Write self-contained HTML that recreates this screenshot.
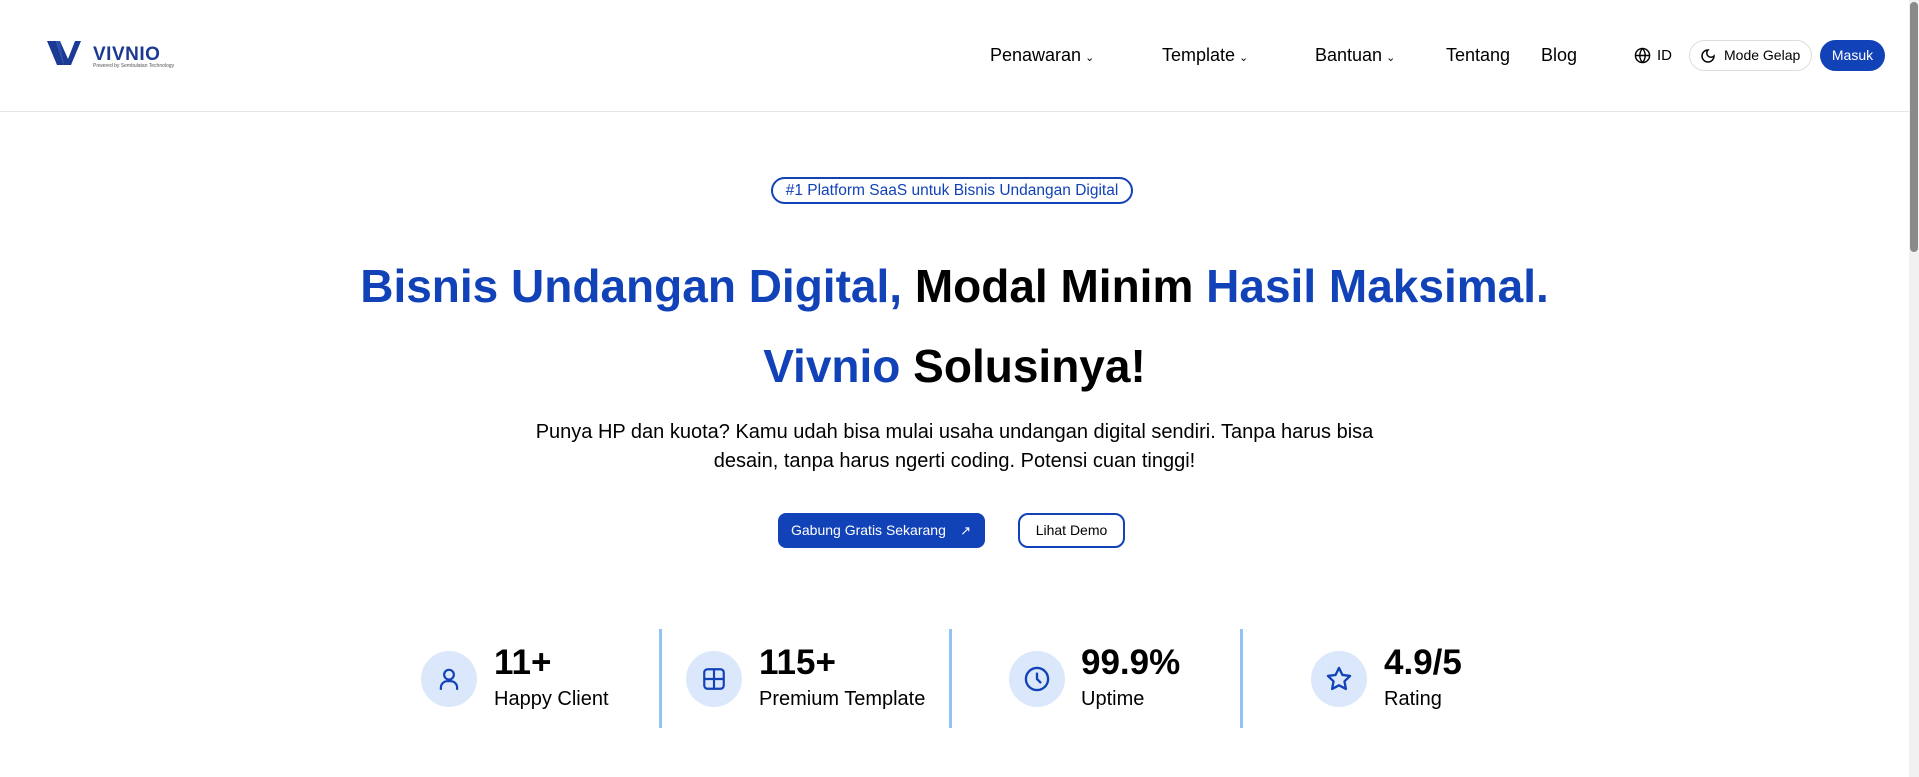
<!DOCTYPE html>
<html><head><meta charset="utf-8"><style>
*{margin:0;padding:0;box-sizing:border-box}
body{width:1919px;height:777px;overflow:hidden;background:#fff;font-family:"Liberation Sans",sans-serif;color:#000;position:relative}
.a{position:absolute;white-space:nowrap}
.nav{font-size:18px;top:45px}
.car{font-size:11px;margin-left:4px}
.blue{color:#1242b8}
.stat .n{font-size:35px;font-weight:bold;top:643px}
.stat .l{font-size:20px;top:688px}
.circ{width:56px;height:56px;border-radius:50%;background:#dbe8fb;top:651px;display:flex;align-items:center;justify-content:center}
.div{width:3px;height:99px;background:#93c3f3;top:629px}
</style></head><body>
<div class="a" style="left:0;top:111px;width:1909px;height:1px;background:#e6e6e6"></div>
<div class="a" style="left:1909px;top:0;width:10px;height:777px;background:#f1f1f1"></div>
<div class="a" style="left:1910px;top:2px;width:8px;height:250px;background:#8a8a8a;border-radius:4px"></div>
<svg class="a" style="left:47px;top:39px" width="42" height="28" viewBox="0 0 42 28"><polygon points="0,2 9,2 17,26 10,26" fill="#1c3a94"/><polygon points="9,2 13,2 21,26 17,26" fill="#2a4cb0"/><polygon points="13,2 17,26 24,26 34,2 28,2 21,20" fill="#1c3a94"/></svg>
<div class="a" style="left:93px;top:44px;font-size:19px;font-weight:bold;color:#1c3a94;letter-spacing:0.5px">VIVNIO</div>
<div class="a" style="left:93px;top:63px;font-size:5px;color:#555">Powered by Sembulatan Technology</div>
<div class="a nav" style="left:990px">Penawaran<span class="car">⌄</span></div>
<div class="a nav" style="left:1162px">Template<span class="car">⌄</span></div>
<div class="a nav" style="left:1315px">Bantuan<span class="car">⌄</span></div>
<div class="a nav" style="left:1446px">Tentang</div>
<div class="a nav" style="left:1541px">Blog</div>
<svg class="a" style="left:1634px;top:47px" width="17" height="17" viewBox="0 0 24 24" fill="none" stroke="#000" stroke-width="2"><circle cx="12" cy="12" r="10"/><path d="M2 12h20M12 2a15 15 0 0 1 0 20M12 2a15 15 0 0 0 0 20"/></svg>
<div class="a" style="left:1657px;top:47px;font-size:15px">ID</div>
<div class="a" style="left:1689px;top:40px;width:123px;height:31px;border:1px solid #ddd;border-radius:16px"></div>
<svg class="a" style="left:1700px;top:48px" width="16" height="16" viewBox="0 0 24 24" fill="none" stroke="#000" stroke-width="2.2"><path d="M12 3a6 6 0 0 0 9 9 9 9 0 1 1-9-9z"/></svg>
<div class="a" style="left:1724px;top:47px;font-size:14px">Mode Gelap</div>
<div class="a" style="left:1820px;top:40px;width:65px;height:31px;background:#1242b8;border-radius:16px;color:#fff;font-size:14px;text-align:center;line-height:31px">Masuk</div>
<div class="a" style="left:771px;top:177px;width:362px;height:27px;border:2px solid #1242b8;border-radius:14px;font-size:15.5px;color:#1242b8;text-align:center;line-height:23px">#1 Platform SaaS untuk Bisnis Undangan Digital</div>
<div class="a" style="left:0;width:1909px;top:256px;text-align:center;font-size:46px;font-weight:bold;line-height:60px"><span class="blue">Bisnis Undangan Digital,</span> Modal Minim <span class="blue">Hasil Maksimal.</span></div>
<div class="a" style="left:0;width:1909px;top:336px;text-align:center;font-size:46px;font-weight:bold;line-height:60px"><span class="blue">Vivnio</span> Solusinya!</div>
<div class="a" style="left:0;width:1909px;top:418px;text-align:center;font-size:20px;line-height:29px;white-space:normal"><div>Punya HP dan kuota? Kamu udah bisa mulai usaha undangan digital sendiri. Tanpa harus bisa</div><div>desain, tanpa harus ngerti coding. Potensi cuan tinggi!</div></div>
<div class="a" style="left:778px;top:513px;width:207px;height:35px;background:#1242b8;border-radius:8px;color:#fff;font-size:14px;line-height:35px;padding-left:13px">Gabung Gratis Sekarang<span style="position:absolute;right:14px;font-size:13px">↗</span></div>
<div class="a" style="left:1018px;top:513px;width:107px;height:35px;border:2px solid #1242b8;border-radius:10px;font-size:14px;text-align:center;line-height:31px">Lihat Demo</div>
<div class="stat">
<div class="a div" style="left:659px"></div><div class="a div" style="left:949px"></div><div class="a div" style="left:1240px"></div>
<div class="a circ" style="left:421px"><svg width="26" height="26" viewBox="0 0 24 24" fill="none" stroke="#1242b8" stroke-width="2"><circle cx="12" cy="8" r="4.5"/><path d="M4.5 22v-2a6 6 0 0 1 6-6h3a6 6 0 0 1 6 6v2"/></svg></div>
<div class="a n" style="left:494px">11+</div><div class="a l" style="left:494px">Happy Client</div>
<div class="a circ" style="left:686px"><svg width="26" height="26" viewBox="0 0 24 24" fill="none" stroke="#1242b8" stroke-width="2"><rect x="3" y="3" width="18" height="18" rx="3"/><path d="M3 12h18M12 3v18"/></svg></div>
<div class="a n" style="left:759px">115+</div><div class="a l" style="left:759px">Premium Template</div>
<div class="a circ" style="left:1009px"><svg width="28" height="28" viewBox="0 0 24 24" fill="none" stroke="#1242b8" stroke-width="2"><circle cx="12" cy="12" r="9.5"/><path d="M12 6.5V12l3.5 3.5"/></svg></div>
<div class="a n" style="left:1081px">99.9%</div><div class="a l" style="left:1081px">Uptime</div>
<div class="a circ" style="left:1311px"><svg width="28" height="28" viewBox="0 0 24 24" fill="none" stroke="#1242b8" stroke-width="2" stroke-linejoin="round"><path d="M12 2.5l2.9 6 6.6.9-4.8 4.6 1.2 6.5L12 17.4l-5.9 3.1 1.2-6.5L2.5 9.4l6.6-.9z"/></svg></div>
<div class="a n" style="left:1384px">4.9/5</div><div class="a l" style="left:1384px">Rating</div>
</div>
</body></html>
